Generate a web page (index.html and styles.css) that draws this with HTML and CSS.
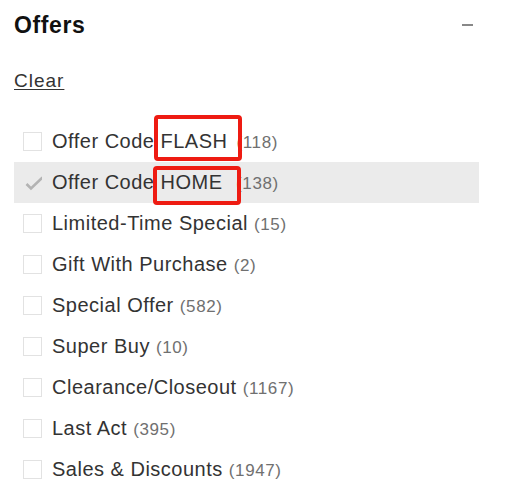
FILE: index.html
```html
<!DOCTYPE html>
<html lang="en">
<head>
<meta charset="UTF-8">
<meta name="viewport" content="width=device-width, initial-scale=1.0">
<title>Offers</title>
<link rel="stylesheet" href="styles.css">
</head>
<body>
<div class="filter">
  <div class="filter-head">
    <h2>Offers</h2>
    <span class="collapse"></span>
  </div>

  <a class="clear" href="#">Clear</a>

  <ul class="options">
    <li><span class="box"></span><span class="label">Offer Code <span class="mark mark-flash">FLASH</span> <span class="count count-flash">(118)</span></span></li>
    <li class="checked">
      <svg class="tick" width="19" height="19" viewBox="0 0 19 19"><path d="M3.5 11 L8 15.5 L19.5 4.5" fill="none" stroke="#b3b3b3" stroke-width="2.6"/></svg>
      <span class="label">Offer Code <span class="mark mark-home">HOME</span> <span class="count count-home">(138)</span></span>
    </li>
    <li><span class="box"></span><span class="label">Limited-Time Special <span class="count">(15)</span></span></li>
    <li><span class="box"></span><span class="label">Gift With Purchase <span class="count">(2)</span></span></li>
    <li><span class="box"></span><span class="label">Special Offer <span class="count">(582)</span></span></li>
    <li><span class="box"></span><span class="label">Super Buy <span class="count">(10)</span></span></li>
    <li><span class="box"></span><span class="label">Clearance/Closeout <span class="count">(1167)</span></span></li>
    <li><span class="box"></span><span class="label">Last Act <span class="count">(395)</span></span></li>
    <li><span class="box"></span><span class="label">Sales &amp; Discounts <span class="count">(1947)</span></span></li>
  </ul>
</div>
</body>
</html>
```

FILE: styles.css
```css
body {
  margin: 0;
  padding: 0;
  font-family: "Liberation Sans", Arial, sans-serif;
  background: #fff;
  color: #333;
}

.filter {
  padding: 12px 28px 0 14px;
}

.filter-head {
  display: flex;
  align-items: center;
  justify-content: space-between;
  padding-right: 6px;
}

.filter-head h2 {
  margin: 0;
  font-size: 23px;
  line-height: 26px;
  letter-spacing: 0.6px;
  font-weight: bold;
  color: #111;
}

.collapse {
  width: 11px;
  height: 2px;
  background: #888;
}

.clear {
  display: inline-block;
  margin-top: 31px;
  font-size: 19px;
  line-height: 24px;
  letter-spacing: 1px;
  color: #333;
  text-decoration: underline;
  text-underline-offset: 2px;
}

.options {
  list-style: none;
  margin: 28px 0 0;
  padding: 0;
}

.options li {
  display: flex;
  align-items: center;
  height: 41px;
  padding-left: 9px;
  gap: 10px;
  font-size: 20px;
  letter-spacing: 0.5px;
}

.options li.checked {
  background: #ebebeb;
}

.box {
  width: 17px;
  height: 17px;
  border: 1px solid #e2e2e2;
  background: #fff;
  flex-shrink: 0;
}

.tick {
  flex-shrink: 0;
}

.label {
  white-space: nowrap;
}

.count {
  font-size: 17px;
  letter-spacing: 0.6px;
  color: #707070;
}

/* the annotation border sits over the opening paren */
.count-flash {
  margin-left: 3px;
}

.count-home {
  margin-left: 7.5px;
}

/* red annotation boxes drawn over the codes */
.mark {
  position: relative;
}

.mark::after {
  content: "";
  position: absolute;
  border: 4px solid #ee1b12;
  border-radius: 4px;
}

.mark-flash::after {
  top: -15px;
  bottom: -9px;
  left: -7px;
  right: -14px;
}

.mark-home::after {
  top: -5px;
  bottom: -12px;
  left: -8px;
  right: -18px;
}
```
